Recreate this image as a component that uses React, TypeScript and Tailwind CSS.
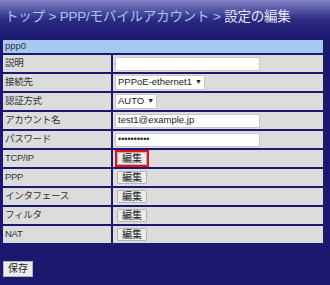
import React from 'react';

const font = { fontFamily: '"Liberation Sans", "Noto Sans CJK JP", sans-serif' };

const EditButton = ({ active }: { active?: boolean }) => (
  <div className={active ? 'border-2 border-[#e8101a] flex' : 'border-2 border-transparent flex'}>
    <button className="h-[13px] px-[4px] bg-[#ececec] border border-[#b4b4b4] text-[10px] leading-[11px] text-[#222] rounded-[1px]">
      編集
    </button>
  </div>
);

const Row = ({ label, children }: { label: string; children: React.ReactNode }) => (
  <>
    <div className="h-[17px] bg-[#dcdcdc] pl-[2px] flex items-center text-[9.5px] text-[#333] tracking-[-0.3px]">{label}</div>
    <div className="h-[17px] bg-[#dcdcdc] pl-[2px] flex items-center">{children}</div>
  </>
);

const App = () => {
  return (
    <div className="w-[330px] h-[285px] bg-[#1b196f] overflow-hidden" style={font}>
      {/* パンくず */}
      <div className="h-[40px] bg-gradient-to-b from-[#8482c8] via-[#2c2a80] to-[#1b196f] px-[5px] pt-[8px]">
        <div className="text-[13.5px] leading-[18px] tracking-[-0.2px] whitespace-nowrap text-[#a2c8f0]">
          トップ &gt; PPP/モバイルアカウント &gt; <span className="text-[#e6e6f2]">設定の編集</span>
        </div>
      </div>

      {/* 設定テーブル */}
      <div className="mx-[3px] w-[320px]">
        <div className="h-[13px] bg-[#a6c9f1] pl-[2px] flex items-center text-[9.5px] text-[#333] mb-[2px]">ppp0</div>
        <div className="grid grid-cols-[108px_210px] gap-[2px]">
          <Row label="説明">
            <input className="w-[145px] h-[14px] bg-white border border-[#c8c8c8] outline-none" />
          </Row>
          <Row label="接続先">
            <div className="h-[15px] bg-white border border-[#c8c8c8] flex items-center px-[2px] text-[9.5px] text-[#222] gap-[3px]">
              PPPoE-ethernet1 <span className="text-[7px]">▼</span>
            </div>
          </Row>
          <Row label="認証方式">
            <div className="h-[15px] bg-white border border-[#c8c8c8] flex items-center px-[2px] text-[9.5px] text-[#222] gap-[3px]">
              AUTO <span className="text-[7px]">▼</span>
            </div>
          </Row>
          <Row label="アカウント名">
            <div className="w-[145px] h-[14px] bg-white border border-[#c8c8c8] flex items-center px-[2px] text-[9.5px] text-[#222]">
              test1@example.jp
            </div>
          </Row>
          <Row label="パスワード">
            <div className="w-[145px] h-[14px] bg-white border border-[#c8c8c8] flex items-center px-[2px] text-[9px] text-[#222]">
              ••••••••••
            </div>
          </Row>
          <Row label="TCP/IP">
            <EditButton active />
          </Row>
          <Row label="PPP">
            <EditButton />
          </Row>
          <Row label="インタフェース">
            <EditButton />
          </Row>
          <Row label="フィルタ">
            <EditButton />
          </Row>
          <Row label="NAT">
            <EditButton />
          </Row>
        </div>
      </div>

      {/* 保存 */}
      <div className="px-[3px] pt-[18px] flex">
        <button className="h-[16px] px-[4px] bg-[#ececec] border border-[#b4b4b4] text-[10px] leading-[12px] text-[#222]">
          保存
        </button>
      </div>
    </div>
  );
};

export default App;
